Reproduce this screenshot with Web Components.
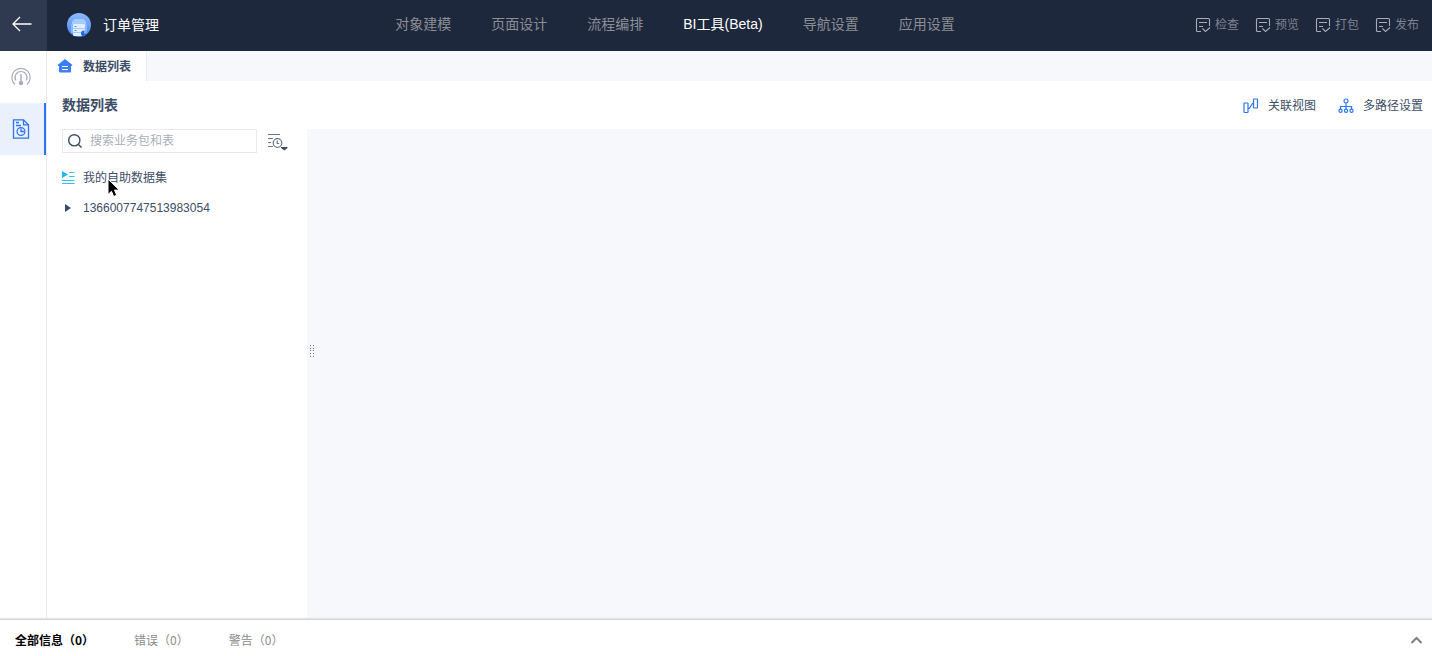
<!DOCTYPE html>
<html lang="zh-CN">
<head>
<meta charset="utf-8">
<title>订单管理</title>
<style>
  html, body { height: 100%; }
  body {
    --navy: #1e283c;
    --blue: #2d74f0;
    --ink: #3d4d66;
    --line: #e8eaef;
    --canvas: #f7f8fb;
    margin: 0;
    font: 12px/20px "Liberation Sans", "Noto Sans CJK SC", sans-serif;
    color: var(--ink);
    background: #fff;
  }
</style>
</head>
<body>
<bi-app>
  <app-header slot="header" name="订单管理">
    <nav-item>对象建模</nav-item>
    <nav-item>页面设计</nav-item>
    <nav-item>流程编排</nav-item>
    <nav-item active>BI工具(Beta)</nav-item>
    <nav-item>导航设置</nav-item>
    <nav-item>应用设置</nav-item>
    <header-action slot="actions">检查</header-action>
    <header-action slot="actions">预览</header-action>
    <header-action slot="actions">打包</header-action>
    <header-action slot="actions">发布</header-action>
  </app-header>

  <side-rail slot="rail"></side-rail>

  <tab-bar slot="main">数据列表</tab-bar>
  <title-bar slot="main" heading="数据列表">
    <tool-link icon="link">关联视图</tool-link>
    <tool-link icon="tree">多路径设置</tool-link>
  </title-bar>
  <data-pane slot="main">
    <tree-item icon="dataset" pointer>我的自助数据集</tree-item>
    <tree-item icon="arrow">1366007747513983054</tree-item>
  </data-pane>

  <message-bar slot="footer"></message-bar>
</bi-app>

<script>
  const reset = `
    button {
      font: inherit;
      color: inherit;
      background: none;
      border: 0;
      padding: 0;
      cursor: pointer;
    }
    a { color: inherit; text-decoration: none; }
    svg { display: block; flex: none; }
  `;

  const icons = {
    link: `
      <svg width="16" height="16" viewBox="0 0 16 16" fill="none" stroke="#2d74f0" stroke-width="1.200">
        <rect x="1" y="5" width="4" height="9.500" rx=".5"/>
        <rect x="10.500" y="1" width="4" height="9" rx=".5"/>
        <path d="M5 10.500h1.200L9.500 5.500h1"/>
      </svg>`,
    tree: `
      <svg width="16" height="16" viewBox="0 0 16 16" fill="none" stroke="#2d74f0" stroke-width="1.200">
        <circle cx="8" cy="3" r="2"/>
        <path d="M8 5v6M2.500 11V8.500h11V11"/>
        <circle cx="2.500" cy="12.800" r="1.600"/>
        <circle cx="8" cy="12.800" r="1.600"/>
        <circle cx="13.500" cy="12.800" r="1.600"/>
      </svg>`,
    dataset: `
      <svg width="14" height="14" viewBox="0 0 14 14">
        <path d="M1 0l6 3.500L1 7z" fill="#20b8ea"/>
        <path d="M8 1.500h5.500M8 5.500h5.500M1 9.500h12.500M1 12.500h12.500" stroke="#2fc0ec" stroke-width="1.200" fill="none"/>
      </svg>`,
    arrow: `
      <svg width="14" height="14" viewBox="0 0 14 14">
        <path d="M4 3l6 4-6 4z" fill="#3d4d66"/>
      </svg>`
  };

  class BiApp extends HTMLElement {
    constructor() {
      super();
      this.attachShadow({ mode: 'open' });
      this.shadowRoot.innerHTML = `
        <style>
          :host { display: flex; flex-direction: column; min-height: 100vh; }
          .body { display: flex; flex: 1; }
          main { display: flex; flex-direction: column; flex: 1; min-width: 0; }
        </style>
        <slot name="header"></slot>
        <div class="body">
          <slot name="rail"></slot>
          <main><slot name="main"></slot></main>
        </div>
        <slot name="footer"></slot>
      `;
    }
  }

  class AppHeader extends HTMLElement {
    constructor() {
      super();
      this.attachShadow({ mode: 'open' });
      this.shadowRoot.innerHTML = `
        <style>
          ${reset}
          :host {
            display: block;
            color: #fff;
            background: var(--navy);
          }
          header { display: flex; align-items: center; height: 51px; }
          .back {
            display: flex;
            align-items: center;
            justify-content: center;
            width: 47px;
            height: 51px;
            padding: 0 4px 4px 0;
            box-sizing: border-box;
            background: #2f3a51;
          }
          .brand {
            display: flex;
            align-items: center;
            gap: 12px;
            padding: 0 0 2px 20px;
            font-size: 14px;
            white-space: nowrap;
          }
          nav {
            display: flex;
            justify-content: center;
            flex: 1;
            gap: 40px;
            padding: 0 4px 4px 0;
          }
          .actions { display: flex; gap: 16px; padding: 0 13px 2px 0; }
        </style>
        <header>
          <button class="back" aria-label="返回">
            <svg width="20" height="16" viewBox="0 0 20 16" fill="none" stroke="#fff" stroke-width="1.300">
              <path d="M8 1L1 8l7 7M1 8h18.500"/>
            </svg>
          </button>
          <div class="brand">
            <svg width="24" height="24" viewBox="0 0 24 24">
              <defs>
                <linearGradient id="disc" x1="0" y1="0" x2="0" y2="1">
                  <stop offset="0" stop-color="#8ebcfa"/>
                  <stop offset="1" stop-color="#4383f2"/>
                </linearGradient>
                <clipPath id="round"><circle cx="12" cy="12" r="12"/></clipPath>
              </defs>
              <g clip-path="url(#round)">
                <path d="M0 0h24v24H0z" fill="url(#disc)"/>
                <path d="M5 9l2.500-3h9L19 9v5H5z" fill="#a5ccff"/>
                <path d="M4 11h3v9H4zM18 11h2v8h-2z" fill="#8ab9fc"/>
                <rect x="6" y="11" width="12" height="12" rx="1" fill="#e2efff"/>
                <path d="M6 15.500h12M6 19.500h12" stroke="#a3c9ff"/>
                <path d="M7.500 13.500h2M7.500 17.500h2" stroke="#4c8bf5"/>
                <circle cx="17" cy="20.500" r="3" fill="#2467e4"/>
                <path d="M17 17.500v3h3a3 3 0 0 0-3-3z" fill="#82b3ff"/>
              </g>
            </svg>
            <span>${this.getAttribute('name')}</span>
          </div>
          <nav><slot></slot></nav>
          <div class="actions"><slot name="actions"></slot></div>
        </header>
      `;
    }
  }

  class NavItem extends HTMLElement {
    constructor() {
      super();
      this.attachShadow({ mode: 'open' });
      this.shadowRoot.innerHTML = `
        <style>
          ${reset}
          :host { display: block; font-size: 14px; color: #8b8e94; white-space: nowrap; }
          :host([active]) { color: #fff; }
          a:hover { color: #fff; }
        </style>
        <a href="#"><slot></slot></a>
      `;
    }
  }

  class HeaderAction extends HTMLElement {
    constructor() {
      super();
      this.attachShadow({ mode: 'open' });
      this.shadowRoot.innerHTML = `
        <style>
          ${reset}
          :host { display: block; color: #7d838f; }
          button { display: flex; align-items: center; gap: 4px; white-space: nowrap; }
          button:hover { color: #fff; }
        </style>
        <button>
          <svg width="16" height="16" viewBox="0 0 16 16" fill="none" stroke="#a5adba" stroke-width="1.100">
            <path d="M6 14.500H2.500a1 1 0 0 1-1-1v-11a1 1 0 0 1 1-1h11a1 1 0 0 1 1 1V9"/>
            <path d="M4 5.500h8M4 9.500h4M7.500 11.500l3 3 4.500-4"/>
          </svg>
          <slot></slot>
        </button>
      `;
    }
  }

  class SideRail extends HTMLElement {
    constructor() {
      super();
      this.attachShadow({ mode: 'open' });
      this.shadowRoot.innerHTML = `
        <style>
          ${reset}
          :host { display: block; width: 46px; border-right: 1px solid var(--line); }
          a {
            display: flex;
            align-items: center;
            justify-content: center;
            height: 52px;
            padding-right: 2px;
            border-right: 2px solid transparent;
          }
          a.active { background: #eaf0fc; border-color: var(--blue); }
        </style>
        <nav>
          <a href="#" aria-label="仪表板">
            <svg width="20" height="20" viewBox="0 0 20 20" fill="none" stroke="#a9afbb" stroke-width="1.200">
              <path d="M4 17.500a9.200 9.200 0 1 1 12 0"/>
              <path d="M4.800 13.500a6 6 0 1 1 10.400 0"/>
              <path d="M10 7v9" stroke-width="1.500"/>
              <circle cx="10" cy="16" r="1.700" fill="#a4aab7"/>
            </svg>
          </a>
          <a href="#" class="active" aria-label="数据列表">
            <svg width="18" height="20" viewBox="0 0 18 20" fill="none" stroke="#2d74f0" stroke-width="1.300">
              <path d="M1.500 .8h10l5 5v13.400h-15z"/>
              <path d="M11.500 .8v5h5M4 3.500h3M4 6.500h5"/>
              <circle cx="9" cy="12.500" r="3.900"/>
              <path d="M9 9.500v3h3"/>
            </svg>
          </a>
        </nav>
      `;
    }
  }

  class TabBar extends HTMLElement {
    constructor() {
      super();
      this.attachShadow({ mode: 'open' });
      this.shadowRoot.innerHTML = `
        <style>
          ${reset}
          :host { display: flex; background: var(--canvas); }
          button {
            display: flex;
            align-items: center;
            gap: 10px;
            height: 30px;
            padding: 2px 15px 0 10px;
            font-weight: 600;
            background: #fff;
            border-right: 1px solid var(--line);
          }
          svg { margin-bottom: 2px; }
        </style>
        <button>
          <svg width="16" height="16" viewBox="0 0 16 16">
            <path d="M8 1l7.500 6-.8 1H14v5.500a1 1 0 0 1-1 1H3a1 1 0 0 1-1-1V8h-.7L.5 7z" fill="#3a80f4"/>
            <path d="M5 8.500h6M5 11.500h6" stroke="#fff" stroke-width="1.200"/>
          </svg>
          <slot></slot>
        </button>
      `;
    }
  }

  class TitleBar extends HTMLElement {
    constructor() {
      super();
      this.attachShadow({ mode: 'open' });
      this.shadowRoot.innerHTML = `
        <style>
          :host {
            display: flex;
            align-items: center;
            justify-content: space-between;
            height: 48px;
            padding: 0 9px 0 15px;
          }
          h1 { margin: 0; font-size: 14px; font-weight: 600; }
          div { display: flex; gap: 22px; padding-top: 1px; }
        </style>
        <h1>${this.getAttribute('heading')}</h1>
        <div><slot></slot></div>
      `;
    }
  }

  class ToolLink extends HTMLElement {
    constructor() {
      super();
      this.attachShadow({ mode: 'open' });
      this.shadowRoot.innerHTML = `
        <style>
          ${reset}
          :host { display: block; }
          button { display: flex; align-items: center; gap: 9px; }
        </style>
        <button>${icons[this.getAttribute('icon')]}<slot></slot></button>
      `;
    }
  }

  class DataPane extends HTMLElement {
    constructor() {
      super();
      this.attachShadow({ mode: 'open' });
      this.shadowRoot.innerHTML = `
        <style>
          ${reset}
          :host { display: flex; flex: 1; }
          aside { width: 260px; }
          .tools { display: flex; align-items: center; gap: 10px; padding: 0 15px 10px; }
          label {
            display: flex;
            align-items: center;
            gap: 7px;
            width: 195px;
            height: 24px;
            padding: 0 5px;
            box-sizing: border-box;
            border: 1px solid var(--line);
          }
          input {
            flex: 1;
            min-width: 0;
            padding: 0;
            border: 0;
            outline: 0;
            font: inherit;
            color: inherit;
          }
          input::placeholder { color: #a9afba; }
          section { display: flex; align-items: center; flex: 1; background: var(--canvas); }
          .grip { padding: 0 3px; margin-bottom: 46px; cursor: col-resize; }
        </style>
        <aside>
          <div class="tools">
            <label>
              <svg width="15" height="16" viewBox="0 0 15 16" fill="none" stroke="#3d4d66" stroke-width="1.400">
                <circle cx="6.300" cy="7.300" r="5.600"/>
                <path d="M10.500 11.500l3 3"/>
              </svg>
              <input type="text" aria-label="搜索业务包和表" placeholder="搜索业务包和表">
            </label>
            <button aria-label="排序">
              <svg width="22" height="20" viewBox="0 0 22 20" fill="none" stroke="#6a768a" stroke-width="1.200">
                <path d="M1 3.500h12M1 7.500h5M1 11.500h3M1 15.500h5"/>
                <circle cx="10.500" cy="12" r="4.300"/>
                <path d="M10.200 9.500v3h2"/>
                <path d="M14 16h6.500v1l-3.200 2.500L14 17z" fill="#3d4d66" stroke="none"/>
              </svg>
            </button>
          </div>
          <slot></slot>
        </aside>
        <section>
          <div class="grip">
            <svg width="4" height="12" viewBox="0 0 4 12" fill="#6a7280">
              <path d="M0 0h1v1H0zM3 0h1v1H3zM0 3h1v1H0zM3 3h1v1H3zM0 5h1v1H0zM3 5h1v1H3zM0 8h1v1H0zM3 8h1v1H3zM0 11h1v1H0zM3 11h1v1H3z"/>
            </svg>
          </div>
        </section>
      `;
    }
  }

  class TreeItem extends HTMLElement {
    constructor() {
      super();
      this.attachShadow({ mode: 'open' });
      this.shadowRoot.innerHTML = `
        <style>
          ${reset}
          :host { display: block; position: relative; padding-left: 14px; }
          button { display: flex; align-items: center; gap: 8px; height: 30px; }
          .pointer { position: absolute; left: 60px; top: 15px; pointer-events: none; }
        </style>
        <button>${icons[this.getAttribute('icon')]}<slot></slot></button>
        ${this.hasAttribute('pointer') ? `
          <svg class="pointer" width="14" height="20" viewBox="0 0 14 20">
            <path d="M1 1v15.500l3.500-3.200 2.200 5.200 3-1.300-2.200-5.100h4.800z" fill="#000" stroke="#fff"/>
          </svg>` : ''}
      `;
    }
  }

  class MessageBar extends HTMLElement {
    constructor() {
      super();
      this.attachShadow({ mode: 'open' });
      this.shadowRoot.innerHTML = `
        <style>
          ${reset}
          :host {
            display: block;
            font-family: "Noto Sans CJK SC", sans-serif;
            color: #8c8c8c;
            border-top: 1px solid #d2d4d8;
            box-shadow: 0 -1px 1px #e4e6ea;
          }
          footer { display: flex; align-items: center; height: 36px; padding: 4px 9px 0 15px; box-sizing: border-box; }
          .tabs { display: flex; flex: 1; gap: 40px; }
          .active { font-weight: 700; color: #000; }
        </style>
        <footer>
          <div class="tabs">
            <button class="active">全部信息（0）</button>
            <button>错误（0）</button>
            <button>警告（0）</button>
          </div>
          <button aria-label="展开">
            <svg width="13" height="10" viewBox="0 0 13 10" fill="none" stroke="#7f7f7f" stroke-width="2">
              <path d="M1.500 8l5-5 5 5"/>
            </svg>
          </button>
        </footer>
      `;
    }
  }

  customElements.define('bi-app', BiApp);
  customElements.define('app-header', AppHeader);
  customElements.define('nav-item', NavItem);
  customElements.define('header-action', HeaderAction);
  customElements.define('side-rail', SideRail);
  customElements.define('tab-bar', TabBar);
  customElements.define('title-bar', TitleBar);
  customElements.define('tool-link', ToolLink);
  customElements.define('data-pane', DataPane);
  customElements.define('tree-item', TreeItem);
  customElements.define('message-bar', MessageBar);
</script>
</body>
</html>
